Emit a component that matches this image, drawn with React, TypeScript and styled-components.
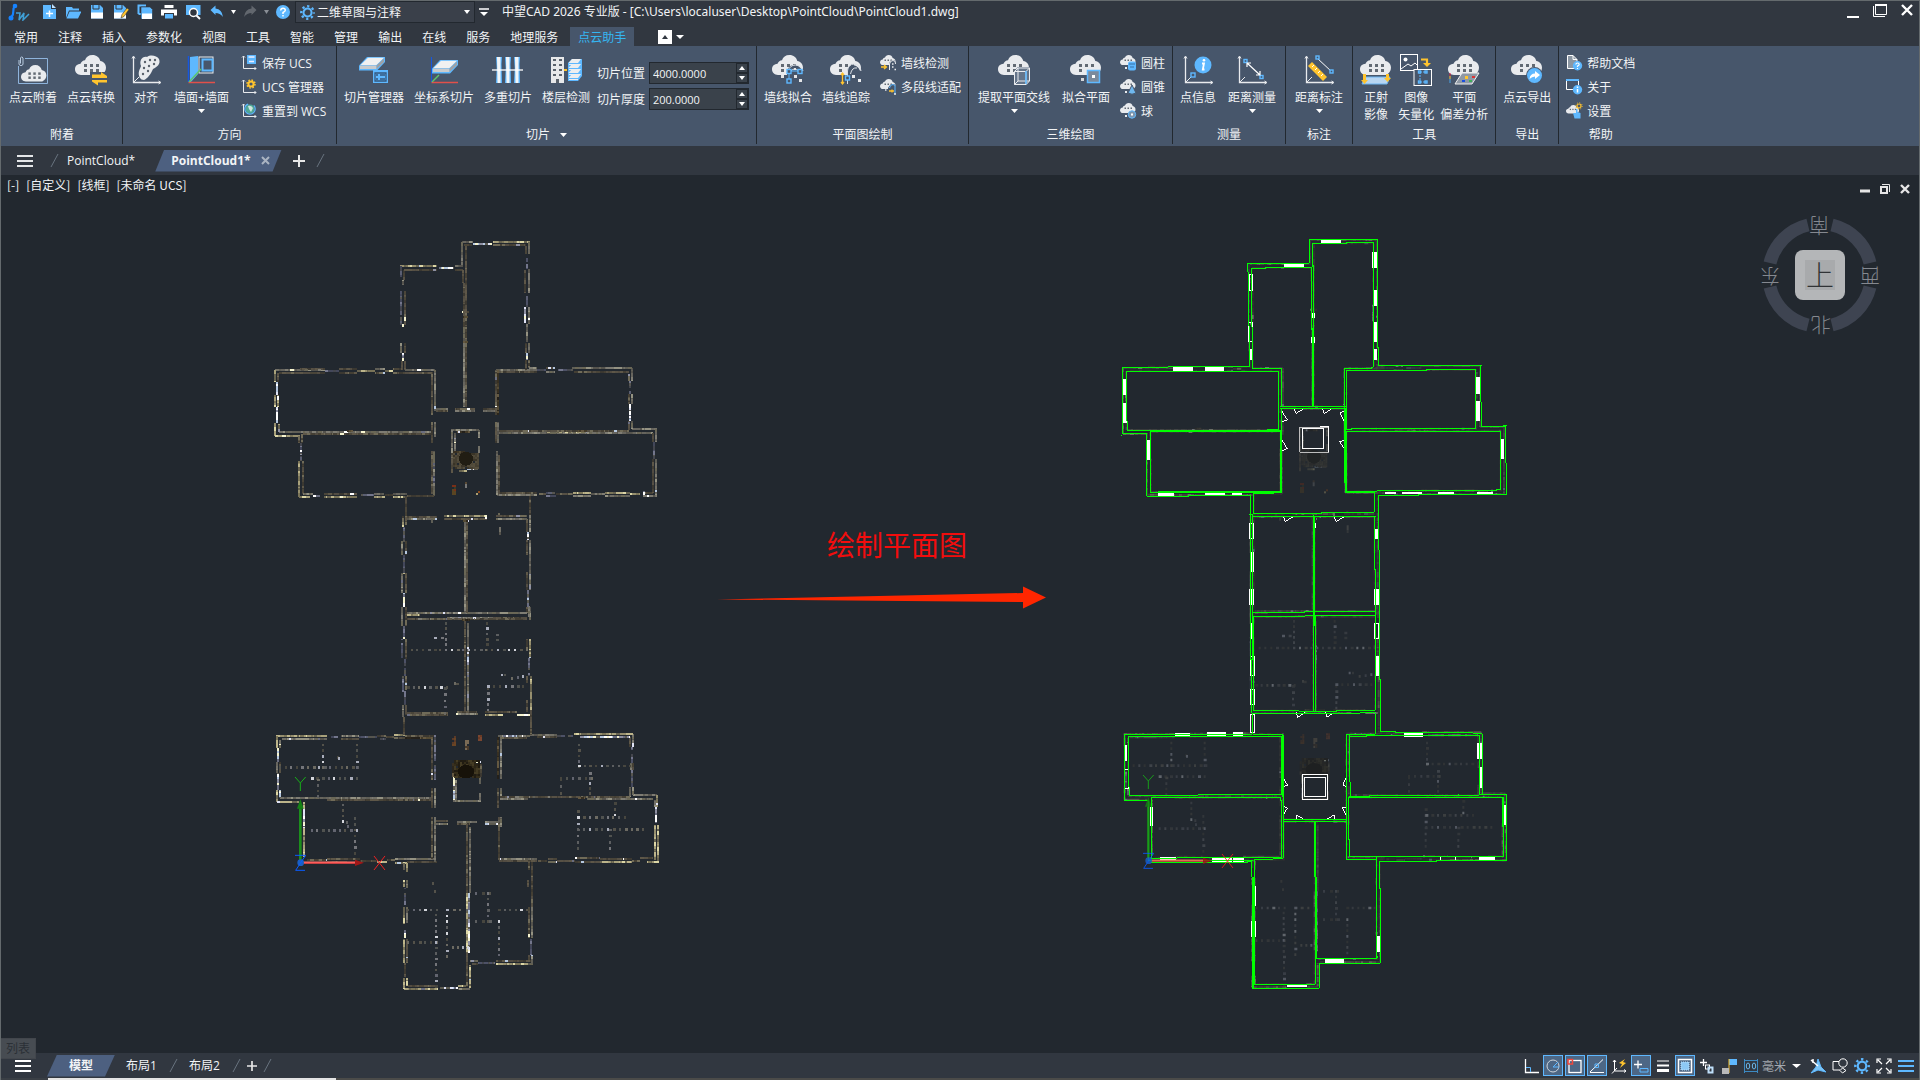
import React from 'react';
import styled, { createGlobalStyle, css } from 'styled-components';

const UI_FONT = `"Open Sans", "Noto Sans CJK SC", sans-serif`;
const BLUE = '#5eb8ff';
const YELLOW = '#ffc42e';
const PALE = '#e9ebee';

const Global = createGlobalStyle`
  * { box-sizing: border-box; }
  body { margin: 0; background: #22282f; font-family: ${UI_FONT}; font-size: 12px; color: #f2f4f6; }
  button, input, select { font: inherit; color: inherit; margin: 0; padding: 0; border: 0; background: none; }
  svg { display: block; flex: none; }
`;

/* ---------- layout ---------- */
const Page = styled.div`
  display: flex;
  flex-direction: column;
  min-height: 100vh;
  border: 1px solid #646a6d;
  border-bottom: 0;
  background: #22282f;
`;
const Row = styled.div<{ $gap?: number }>`
  display: flex;
  align-items: center;
  gap: ${(p) => p.$gap ?? 0}px;
`;
const ToolRow = styled.div`
  display: flex;
  align-items: flex-start;
  gap: 10px;
`;
const TitleBar = styled.header`
  display: flex;
  align-items: center;
  height: 22px;
  background: #313740;
`;
const QuickButton = styled.button<{ $w?: number }>`
  width: ${(p) => p.$w ?? 24}px;
  height: 22px;
  display: flex;
  align-items: center;
  justify-content: center;
`;
const Workspace = styled.label`
  display: flex;
  align-items: center;
  width: 180px;
  height: 22px;
  padding: 0 4px;
  gap: 2px;
  border: 1px solid #22282f;
  background: #3a404a;
`;
const WorkspaceSelect = styled.select`
  appearance: none;
  flex: 1;
  min-width: 0;
  outline: none;
`;
const Title = styled.h1`
  margin: 0 0 0 9px;
  font-family: "Noto Sans", "Noto Sans CJK SC", sans-serif;
  font-size: 12px;
  font-weight: 400;
  line-height: 20px;
  flex: 1;
  white-space: nowrap;
`;
const MenuBar = styled.nav`
  display: flex;
  align-items: flex-end;
  height: 23px;
  padding-left: 3px;
  background: #313740;
`;
const MenuTab = styled.button<{ $active?: boolean }>`
  height: 19px;
  padding: 2px 10px 0;
  line-height: 17px;
  white-space: nowrap;
  ${(p) =>
    p.$active &&
    css`
      margin: 0 2px;
      padding: 2px 8px 0;
      color: #35b6f2;
      background: #47566b;
    `}
`;
const CollapseButton = styled.button`
  display: flex;
  align-items: center;
  gap: 4px;
  height: 19px;
  margin-left: 22px;
`;
const Ribbon = styled.section`
  display: flex;
  height: 100px;
  padding-left: 1px;
  background: #47566b;
`;
const Group = styled.div`
  display: flex;
  flex-direction: column;
  height: 98px;
  padding: 0 7px;
  border-right: 1px solid #22282f;
  &:last-child { border-right: 0; }
`;
const GroupBody = styled.div<{ $gap?: number }>`
  display: flex;
  flex: 1;
  align-items: flex-start;
  gap: ${(p) => p.$gap ?? 10}px;
`;
const GroupLabel = styled.div`
  display: flex;
  align-items: center;
  justify-content: center;
  gap: 10px;
  height: 18px;
  line-height: 18px;
`;
const BigButton = styled.button<{ $menu?: boolean }>`
  display: flex;
  flex-direction: column;
  align-items: center;
  padding: 8px ${(p) => (p.$menu ? 2 : 0)}px 0;
  line-height: 17px;
  white-space: nowrap;
`;
const BigText = styled.span`
  margin: 3px 0;
`;
const SmallList = styled.div<{ $w?: number }>`
  display: flex;
  flex-direction: column;
  min-width: ${(p) => p.$w ?? 0}px;
  padding-top: 5px;
`;
const SmallButton = styled.button`
  display: flex;
  align-items: center;
  gap: 5px;
  height: 24px;
  white-space: nowrap;
`;
const Fields = styled.div`
  display: flex;
  flex-direction: column;
  gap: 4px;
  padding-top: 16px;
`;
const Field = styled.label`
  display: flex;
  align-items: center;
  gap: 4px;
  white-space: nowrap;
`;
const SpinBox = styled.span`
  display: flex;
  width: 100px;
  height: 22px;
  border: 1px solid #22282f;
  background: #3a424b;
`;
const SpinInput = styled.input`
  flex: 1;
  min-width: 0;
  padding: 0 3px;
  font-size: 11px;
  outline: none;
`;
const SpinArrows = styled.span`
  display: flex;
  flex-direction: column;
  width: 12px;
  gap: 2px;
  padding: 1px;
  background: #22282f;
`;
const SpinArrow = styled.button`
  flex: 1;
  display: flex;
  align-items: center;
  justify-content: center;
  background: #3a424b;
`;
const DocTabs = styled.nav`
  display: flex;
  align-items: center;
  height: 29px;
  padding-left: 16px;
  background: #313740;
`;
const DocTab = styled.button`
  padding: 0 20px 0 8px;
  line-height: 22px;
`;
const ActiveDoc = styled.div`
  display: flex;
  align-items: center;
  height: 22px;
  gap: 10px;
  padding: 0 12px 0 16px;
  font-weight: 700;
  background: #4d6080;
  clip-path: polygon(9px 0, 100% 0, calc(100% - 9px) 100%, 0 100%);
`;
const PlainButton = styled.button`
  display: flex;
  align-items: center;
`;
const Canvas = styled.main`
  position: relative;
  flex: 1;
  min-height: 600px;
`;
const Scene = styled.svg`
  position: absolute;
  inset: 0;
  width: 100%;
  height: 100%;
`;
const ViewLabels = styled.div`
  position: absolute;
  left: 6px;
  top: 1px;
  display: flex;
  gap: 7px;
  font-family: "Noto Sans CJK SC", sans-serif;
  line-height: 18px;
`;
const ViewWindow = styled.div`
  position: absolute;
  right: 8px;
  top: 8px;
  display: flex;
  gap: 8px;
`;
const ViewCube = styled.svg`
  position: absolute;
  right: 34px;
  top: 35px;
`;
const ListTip = styled.div`
  position: absolute;
  left: 0;
  bottom: -6px;
  z-index: 1;
  width: 35px;
  height: 21px;
  padding-left: 5px;
  line-height: 19px;
  color: #2b3036;
  border: 1px solid #42464c;
  border-left: 0;
  background: #474c52;
`;
const StatusBar = styled.footer`
  display: flex;
  align-items: center;
  justify-content: space-between;
  height: 25px;
  padding: 0 2px 0 14px;
  background: #313740;
`;
const LayoutTab = styled.button<{ $active?: boolean }>`
  height: 22px;
  padding: 0 12px 0 11px;
  line-height: 22px;
  ${(p) =>
    p.$active &&
    css`
      margin-left: 16px;
      padding: 0 22px;
      font-weight: 700;
      background: #4d6080;
      clip-path: polygon(10px 0, 100% 0, calc(100% - 10px) 100%, 0 100%);
    `}
`;
const StatusButton = styled.button<{ $on?: boolean }>`
  display: flex;
  align-items: center;
  justify-content: center;
  width: 20px;
  height: 21px;
  margin: 0 1px;
  border: 1px solid ${(p) => (p.$on ? BLUE : 'transparent')};
  background: ${(p) => (p.$on ? '#4d6785' : 'transparent')};
`;
const UnitButton = styled.button`
  display: flex;
  align-items: center;
  gap: 6px;
  padding-right: 6px;
  color: #a3a8ae;
`;
const BottomEdge = styled.div`
  height: 2px;
  background: linear-gradient(90deg, #3a3f45 47px, #e4e4e4 47px, #e4e4e4 335px, #4b4b49 335px);
`;

/* ---------- small glyphs ---------- */
const Caret = ({ w = 7, color = '#fff', up = false }: { w?: number; color?: string; up?: boolean }) => (
  <svg width={w} height={4} viewBox="0 0 8 4" preserveAspectRatio="none" aria-hidden>
    <path d={up ? 'M0 4L4 0L8 4z' : 'M0 0H8L4 4z'} fill={color} />
  </svg>
);
const Slash = () => (
  <svg width="9" height="15" viewBox="0 0 9 15" aria-hidden>
    <path d="M1 14L8 1" stroke="#68737f" fill="none" />
  </svg>
);
const Plus = ({ size = 12 }: { size?: number }) => (
  <svg width={size} height={size} viewBox="0 0 12 12" aria-hidden>
    <path d="M6 0V12M0 6H12" stroke="#e8e8e8" strokeWidth="2" />
  </svg>
);
const Burger = ({ w = 16, color = '#e4e6e8' }: { w?: number; color?: string }) => (
  <svg width={w} height="14" viewBox="0 0 16 14" preserveAspectRatio="none" aria-hidden>
    <path d="M0 2H16M0 7H16M0 12H16" stroke={color} strokeWidth="2" />
  </svg>
);

/* ---------- icon parts ---------- */
const CLOUD =
  'M6 20C2.500 20 0 17.500 0 14.300C0 11 2.500 9 5.500 8.800C6.500 6.500 8 5.300 10 5.200C11 2 13.500 0 17.500 0C21.500 0 24.500 2.500 25.300 6C28.800 6.800 31 9 31 12.800C31 16 29 18.500 26 20Z';
const Cloud = ({ x = 0, y = 1, s = 1, dots = 6 }: { x?: number; y?: number; s?: number; dots?: number }) => (
  <g transform={`translate(${x} ${y}) scale(${s})`}>
    <path d={CLOUD} fill={PALE} />
    {[[9, 9], [15, 9], [21, 9], [9, 14], [15, 14], [21, 14]].slice(0, dots).map(([a, b]) => (
      <rect key={`${a}-${b}`} x={a} y={b} width="3" height="3" fill="#626a73" />
    ))}
  </g>
);
const Axes = () => (
  <g stroke={PALE} fill="none">
    <path d="M3.500 3V28.500H30" strokeWidth="1.300" />
    <path d="M2 4.500L3.500 2L5 4.500M28.500 27L31 28.500L28.500 30M4 28L9 23" />
  </g>
);
const Node = ({ x, y, s = 4 }: { x: number; y: number; s?: number }) => (
  <rect x={x} y={y} width={s} height={s} fill="#47566b" stroke={BLUE} strokeWidth="1.400" />
);
const Slab = ({ x = 0, y = 0 }: { x?: number; y?: number }) => (
  <g transform={`translate(${x} ${y})`}>
    <path d="M0 8.500L8 0H26V5L18 13.500H0Z" fill={BLUE} />
    <path d="M1.500 8L9 .8H25L17.500 8Z" fill="#f1f1f1" />
    <path d="M1 8.500H17.500V12H1Z" fill="#c9cbcd" />
    <path d="M17.500 8.500L25 1.500V5L17.500 12Z" fill="#9da1a6" />
  </g>
);
const WallDots = () => (
  <g fill="#e4e6e8">
    <rect x="9" y="21" width="3" height="3" /><rect x="22" y="21" width="3" height="3" />
    <rect x="27" y="25" width="3" height="3" /><rect x="22" y="14" width="2" height="2" />
  </g>
);

const big: Record<string, React.ReactNode> = {
  attach: (<>
    <path d="M8 4.500H30.500V29.500H1.500V12" fill="none" stroke="#8fb4dc" />
    <path d="M2 6V10.500Q4 13 6 10.500V4Q4.500 1.500 3.500 4V9.500" fill="none" stroke="#b9cbe0" />
    <Cloud x={4} y={11} s={0.82} />
  </>),
  convert: (<>
    <Cloud />
    <path d="M15 18H33V32H15Z" fill="#47566b" />
    <path d="M17 20.500H26V18L32 22V24H17ZM32 28.500H23V31.500L17 27.500V26H32Z" fill={YELLOW} />
  </>),
  align: (<>
    <Axes />
    <path d="M10 24C7 19 10 15 11 12C9 7 12 2 17 3C21 0 27 2 29 5C31 10 27 13 23 15C21 20 17 25 14 26Q11 26 10 24Z" fill={PALE} />
    {[[15, 8], [20, 6], [25, 6], [14, 14], [19, 12], [24, 10], [13, 20], [18, 17]].map(([a, b]) => (
      <circle key={a * b} cx={a} cy={b} r="1.200" fill="#59616b" />
    ))}
  </>),
  walls: (<>
    <path d="M5 3V29L13 20V2Z" fill={BLUE} />
    <rect x="14" y="3" width="14" height="16" fill="none" stroke={PALE} />
    <rect x="17.500" y="5.500" width="10" height="11" fill="#47566b" stroke={BLUE} strokeWidth="2" />
    <path d="M3.500 2V28" stroke="#1557e0" strokeWidth="1.500" />
    <path d="M3.500 28.500H30" stroke="#e2504a" strokeWidth="1.500" /><path d="M4 28L16 15" stroke="#5fc46b" strokeWidth="1.500" />
  </>),
  manager: (<>
    <Slab x={1} y={3} />
    <rect x="15" y="16" width="15" height="13" fill={BLUE} />
    <path d="M17 19H28V27H17ZM18 21H20M18 25H20M22 21H27M22 25H27" fill="none" stroke="#35577d" strokeWidth="1.300" />
  </>),
  ucsSlice: (<>
    <Slab x={4} y={6} />
    <path d="M3.500 3V28" stroke="#1557e0" /><path d="M3.500 28.500H30" stroke="#e2504a" strokeWidth="1.500" />
    <path d="M4 28L11 21" stroke="#5fc46b" strokeWidth="1.500" />
  </>),
  multi: (<>
    {[4, 13, 22].map((v) => <path key={v} d={`M${v} 3H${v + 6}L${v + 5.5} 10L${v + 6} 29H${v}L${v + 0.7} 14Z`} fill={BLUE} />)}
    {[5, 14, 23].map((v) => <path key={v} d={`M${v} 3H${v + 3.500}V29H${v + 0.5}Z`} fill="#f3f5f7" />)}
    <path d="M0 16H31" stroke="#fff" strokeWidth="1.300" />
  </>),
  floors: (<>
    <rect x="1" y="3" width="13" height="26" fill="#e7e8ea" />
    {[6, 11, 16, 21].map((v) => <path key={v} d={`M3 ${v}H6M9 ${v}H12`} stroke="#59616b" strokeWidth="2.200" />)}
    <rect x="6" y="25" width="3" height="4" fill="#59616b" />
    <path d="M14 16H17" stroke={YELLOW} strokeWidth="2" />
    <path d="M18 9L22 5H32V22L28 27H18Z" fill={BLUE} />
    {[5, 10, 15, 20].map((v) => <path key={v} d={`M18.500 ${v + 4}L22 ${v}H31L28 ${v + 4}ZM19 ${v + 5}H28V${v + 6}H19Z`} fill="#eceef0" />)}
  </>),
  fit: (<>
    <Cloud dots={4} /><path d="M15 32V17Q17 10 23 11Q30 12 31 21V32Z" fill="#47566b" />
    <path d="M16 17Q18 11 23.500 11T31 17M19 17Q22 13 27 17" fill="none" stroke="#dbe0e6" />
    <path d="M17 18V27M17 17H28" stroke={BLUE} /><Node x={15} y={15.5} /><Node x={26} y={15.5} /><Node x={15} y={25} /><WallDots />
  </>),
  trace: (<>
    <Cloud dots={4} /><path d="M17 32V17Q19 10 23 11Q30 12 31 21V32Z" fill="#47566b" />
    <path d="M17.500 30V17Q18 10 24 10T31 17M20.500 20Q22 13 27 14" fill="none" stroke="#dbe0e6" />
    <path d="M12.500 19V30M11 21L12.500 19L14 21M11 28L12.500 30L14 28" fill="none" stroke={YELLOW} strokeWidth="1.300" />
    <Node x={15.5} y={22} /><rect x="22" y="21" width="3" height="3" fill={PALE} /><rect x="28" y="25" width="3" height="3" fill={PALE} />
  </>),
  intersect: (<>
    <Cloud dots={5} /><path d="M16 17L20 13H32V26L29 31H16Z" fill="#65758a" />
    <path d="M16.500 17.500H28V30.500H16.500ZM16.500 17.500L20 14H31.500V27L28 30.500M28 17.500L31.500 14M20 14V27H31M20 27L16.500 30.500" fill="none" stroke={PALE} />
    <path d="M28 17V30" stroke={BLUE} strokeWidth="1.500" />
  </>),
  plane: (<>
    <Cloud dots={4} /><rect x="17.500" y="16.500" width="12" height="12" fill="#7b8a9c" stroke={BLUE} strokeWidth="1.500" />
    <rect x="22" y="21" width="3" height="3" fill="#fff" /><rect x="11" y="24" width="3" height="3" fill="#d4d7da" />
  </>),
  info: (<>
    <Axes /><path d="M5 27L9 23" stroke={PALE} /><Node x={9} y={19} />
    <circle cx="21" cy="11" r="8.500" fill={BLUE} /><path d="M20 9.500H22L20.800 15.500H22.500" fill="none" stroke="#fff" strokeWidth="1.800" /><circle cx="22" cy="6.200" r="1.300" fill="#fff" />
  </>),
  measure: (<>
    <Axes /><Node x={8} y={5.5} s={3} /><Node x={24} y={21.5} s={3} />
    <path d="M11 9L24 21M11 13V9H15M20 21H24V17" fill="none" stroke="#fff" strokeWidth="1.200" />
  </>),
  dimension: (<>
    <Axes /><path d="M5 12L9 8L24 23L20 27Z" fill={YELLOW} />
    <path d="M9 13L11 11M12 16L14 14M15 19L17 17M18 22L20 20" stroke="#fff" />
    <path d="M14 4L29 18" stroke="#fff" /><Node x={13} y={2} s={3} /><Node x={27} y={16} s={3} />
  </>),
  ortho: (<>
    <Cloud /><path d="M5 23H30L27 30H2Z" fill="#b8d6f2" stroke="#6cb4f0" />
    <path d="M3 20H6V26H8L4.500 30L1 26H3ZM26 20H29V24H31L27.500 28L24 24H26Z" fill={YELLOW} />
  </>),
  vectorize: (<>
    <rect x="0.500" y="0.500" width="17" height="16" fill="none" stroke="#fff" /><circle cx="5.500" cy="5.500" r="2" fill="#fff" />
    <path d="M1 15L8 10L11 12L15 9L18 12" fill="none" stroke="#fff" />
    <path d="M21 5.500H27V11" fill="none" stroke={YELLOW} strokeWidth="2.200" /><path d="M23 9H31L27 13Z" fill={YELLOW} />
    <rect x="14" y="15.500" width="17.500" height="16" fill="#47566b" stroke="#fff" />
    <path d="M20 18V29M20 18H26M20 28H26" stroke={BLUE} strokeDasharray="2 1" /><Node x={18.5} y={17} s={2} /><Node x={25} y={17} s={2} /><Node x={18.5} y={27} s={2} /><Node x={25} y={27} s={2} />
  </>),
  deviation: (<>
    <Cloud /><path d="M14 19H31L24 30H7Z" fill="#8f99a6" stroke="#f0f0f0" />
    <path d="M2 19V22" stroke="#d24" /><path d="M2 22V25" stroke={YELLOW} /><path d="M2 25V29" stroke="#4aa3e8" />
    <g><rect x="17" y="22" width="3" height="3" fill={YELLOW} /><rect x="24" y="22" width="3" height="2" fill="#d33" /><rect x="14" y="26" width="3" height="2" fill="#1a4fe0" /><rect x="21" y="26" width="3" height="2" fill="#3fae5a" /></g>
  </>),
  exportCloud: (<>
    <Cloud dots={4} /><circle cx="23.500" cy="21.500" r="8.500" fill="#47566b" /><circle cx="23.500" cy="21.500" r="7.500" fill={BLUE} />
    <path d="M18.500 25Q19 19.500 24 19.500V17L29 21L24 25V22.500Q21 22.500 18.500 25Z" fill="#fff" />
  </>),
};

const SmallAxes = () => <path d="M2.500 1V13.500H15M1 2.500L2.500 1L4 2.500M13.500 12L15 13.500L13.500 15" fill="none" stroke={PALE} />;
const MiniCloud = () => <Cloud x={0} y={0} s={0.5} dots={3} />;
const small: Record<string, React.ReactNode> = {
  saveUcs: (<><SmallAxes /><rect x="6" y="0" width="9" height="9" fill={BLUE} /><path d="M7.500 2H13.500M8 6.500H13" stroke="#eef" strokeWidth="1.500" /></>),
  ucsManager: (<><SmallAxes /><circle cx="10" cy="5" r="2.600" fill="none" stroke={YELLOW} strokeWidth="2" /><circle cx="10" cy="5" r="4" fill="none" stroke={YELLOW} strokeWidth="1.500" strokeDasharray="1.600 1.540" /></>),
  resetWcs: (<><SmallAxes /><circle cx="9" cy="6" r="4.500" fill="#4fa896" /><path d="M7 3Q10 2 12 5L10 9L8 6Z" fill="#cfe6dd" /><circle cx="9" cy="6" r="5.200" fill="none" stroke={BLUE} strokeWidth="1.200" strokeDasharray="22 6" /></>),
  detect: (<><MiniCloud /><path d="M9 16V9Q10 5 13 5T16 9V16Z" fill="#47566b" /><path d="M9.500 15V9Q10 5.500 13 5.500T15.500 9" fill="none" stroke={PALE} /><path d="M1 12H6M4 10L6.500 12L4 14" stroke={YELLOW} fill="none" strokeWidth="1.300" /><path d="M12 9H13.500M12 12H13.500M14.500 14.500H16" stroke={PALE} strokeWidth="1.500" /></>),
  polyfit: (<><MiniCloud /><path d="M8 16V9Q10 5 13 5T16 9V16Z" fill="#47566b" /><path d="M9.500 9Q10 5.500 13 5.500T15 9V15" fill="none" stroke={BLUE} /><path d="M9 12H14M12 10.500V13.500" stroke={YELLOW} strokeWidth="1.300" /><path d="M5 11H6.500M14 15H16" stroke={PALE} strokeWidth="1.500" /></>),
  cylinder: (<><MiniCloud /><rect x="8" y="6.500" width="8" height="9" rx="2" fill={BLUE} /><path d="M9 9H15M10 12H14" stroke="#3670a8" /><rect x="5" y="12" width="2" height="2" fill={PALE} /></>),
  cone: (<><MiniCloud /><path d="M12 6L16 14Q12 16.500 8 14Z" fill="#6fb7ee" stroke="#47566b" /><rect x="5" y="12" width="2" height="2" fill={PALE} /></>),
  sphere: (<><MiniCloud /><circle cx="12" cy="11.500" r="3.700" fill="#7b94ad" stroke={BLUE} /><rect x="11" y="10.500" width="2" height="2" fill="#fff" /><rect x="5" y="12" width="2" height="2" fill={PALE} /></>),
  helpDoc: (<><path d="M1.500 .5H7L11 4.500V13.500H1.500Z" fill="#8c97a3" stroke="#fff" /><path d="M7 .5V4.500H11" fill="none" stroke="#fff" /><circle cx="11.500" cy="10.800" r="4.700" fill={BLUE} /><path d="M9.800 9.500Q10 8 11.500 8T13.200 9.500Q13 10.500 11.500 11V12M11.500 13V14" fill="none" stroke="#fff" strokeWidth="1.200" /></>),
  about: (<><path d="M.5 1V10.500H8M12.500 1V6" fill="none" stroke="#fff" /><path d="M0 1H13" stroke={BLUE} strokeWidth="2" /><circle cx="11.500" cy="10.800" r="4.700" fill={BLUE} /><path d="M11.500 10V13.500M11.500 7.500V9" stroke="#fff" strokeWidth="1.500" /></>),
  settings: (<><Cloud x={0} y={2} s={0.42} dots={3} /><circle cx="13" cy="3" r="2" fill="none" stroke={YELLOW} strokeWidth="1.200" /><circle cx="13" cy="3" r="3.200" fill="none" stroke={YELLOW} strokeDasharray="1 1.500" /><path d="M10 6V10H7L8.500 15.500H14.500V10L11.500 9V6Z" fill={BLUE} /></>),
};

const BigTool = ({ icon, lines, menu }: { icon: string; lines: string[]; menu?: boolean }) => (
  <BigButton $menu={menu}>
    <svg width="32" height="32" viewBox="0 0 32 32" overflow="visible" aria-hidden>{big[icon]}</svg>
    <BigText>{lines.map((l, i) => <React.Fragment key={l}>{i > 0 && <br />}{l}</React.Fragment>)}</BigText>
    {menu && <Caret />}
  </BigButton>
);
const SmallTool = ({ icon, text }: { icon: string; text: string }) => (
  <SmallButton>
    <svg width="16" height="16" viewBox="0 0 16 16" overflow="visible" aria-hidden>{small[icon]}</svg>
    {text}
  </SmallButton>
);
const Spinner = ({ label, value }: { label: string; value: string }) => (
  <Field>
    {label}
    <SpinBox>
      <SpinInput defaultValue={value} aria-label={label} />
      <SpinArrows>
        <SpinArrow aria-label="+"><Caret up w={6} /></SpinArrow>
        <SpinArrow aria-label="-"><Caret w={6} /></SpinArrow>
      </SpinArrows>
    </SpinBox>
  </Field>
);

/* ---------- quick access icons ---------- */
const Q = ({ children, w = 16 }: { children: React.ReactNode; w?: number }) => (
  <svg width={w} height="16" viewBox={`0 0 ${w} 16`} aria-hidden>{children}</svg>
);
const Disk = ({ x = 0, y = 0 }: { x?: number; y?: number }) => (
  <g transform={`translate(${x} ${y})`}>
    <path d="M0 0H9L12 3V13.500H0Z" fill={BLUE} />
    <path d="M2 0V4H8V0" fill="none" stroke="#313740" />
    <rect x="0" y="7.500" width="12" height="6" fill="#fff" />
  </g>
);
const quick: [string, React.ReactNode][] = [
  ['新建', <><path d="M2 1H10V5H15V15H2Z" fill={BLUE} /><path d="M11 0L15 4H11Z" fill="#bfe2ff" /><path d="M8.500 6.500V13M5 9.500H12" stroke="#fff" strokeWidth="1.500" /></>],
  ['打开', <><path d="M1 14V3H7L8 4.500H14V6.500H4Z" fill={BLUE} /><path d="M4.500 7.500H16.500L13 14.500H1.500Z" fill={BLUE} /></>],
  ['保存', <Disk x={2} y={1} />],
  ['另存为', <><Disk x={1} y={1} /><path d="M8 14L9 10.500L14 4L16 5.500L11 12.500Z" fill={YELLOW} stroke="#313740" strokeWidth=".6" /></>],
  ['全部保存', <><path d="M1.500 10V1.500H9M1.500 10H4" stroke={BLUE} strokeWidth="2" fill="none" /><path d="M4 3H13L15.500 5.500V15H4Z" fill={BLUE} stroke="#313740" strokeWidth=".6" /><rect x="5" y="9.500" width="10" height="5.500" fill="#fff" /></>],
  ['打印', <><path d="M3.500 1H12.500V4H3.500Z" fill="#fff" /><path d="M0 5.500H16V11.500H13V9H3V11.500H0Z" fill="#fff" /><rect x="4" y="10" width="8" height="4.500" fill={BLUE} /></>],
  ['打印预览', <><path d="M1 1H15.500V11H1Z" fill={BLUE} /><circle cx="8.500" cy="8.500" r="4" fill="#313740" stroke="#fff" strokeWidth="1.500" /><path d="M11.500 11.500L15 15" stroke="#fff" strokeWidth="2" /></>],
  ['撤销', <path d="M1.500 6L6.500 1.500V4.500Q13 5 14 13Q11 9 6.500 9V11Z" fill={BLUE} />],
];
const Gear = ({ size = 15, color = BLUE }: { size?: number; color?: string }) => (
  <svg width={size} height={size} viewBox="0 0 16 16" aria-hidden>
    <circle cx="8" cy="8" r="4.300" fill="none" stroke={color} strokeWidth="2.200" />
    <circle cx="8" cy="8" r="6.700" fill="none" stroke={color} strokeWidth="2.400" strokeDasharray="2.400 2.860" strokeDashoffset="1.200" />
  </svg>
);

/* ---------- point cloud ---------- */
const PALETTES: Record<string, string[]> = {
  D: ['#443f34', '#524c42', '#3b3831', '#5e5748', '#4a4539', '#575145', '#706b58'],
  G: ['#727067', '#5f5e56', '#7e7c73', '#6a6756', '#55534d', '#949282', '#67655e'],
  Y: ['#968f6e', '#bcb48a', '#7a7458', '#a8a17b', '#dcd6a6', '#676350'],
  W: ['#ffffff', '#dfe2f4', '#8e90a2', '#f5f3cf', '#6a6d80', '#b5c7df', '#5c5a50'],
  V: ['#4d5166', '#43475a', '#5b5f72', '#73768c', '#44464d', '#56554f'],
  B: ['#2c261c', '#383022', '#433a28', '#554b34', '#24201a', '#645841'],
};
/* x1,y1,x2,y2,palette in thirds of a canvas unit */
const WALLS_TOP = `605,66,640,66,G;700,66,809,66,Y;612,76,635,76,D;640,72,697,72,W;700,76,797,76,D;606,66,606,138,G;618,78,618,190,D;806,66,806,102,G;797,78,797,102,D;801,102,801,147,V;807,147,807,220,G;795,150,795,218,D;801,220,801,262,V;795,260,795,310,W;807,260,807,312,G;801,312,801,366,G;807,368,807,398,G;797,368,797,398,D;801,398,801,420,W;799,420,799,450,D;807,420,807,445,D
421,138,530,138,Y;432,150,530,150,D;536,144,582,144,W;585,138,608,138,G;585,150,608,150,D;423,138,423,170,V;432,150,432,180,D;429,180,429,196,G;423,213,423,315,V;434,213,434,315,D;429,313,429,320,W;423,368,423,400,G;434,368,434,400,D;429,400,429,422,W;426,422,426,450,D;434,424,434,450,D;609,150,609,190,D;612,190,612,320,D;618,190,618,320,D;612,320,612,400,G;618,320,618,400,D;612,400,612,560,G;618,400,618,560,D;585,566,645,566,D;585,573,645,573,G;606,275,627,275,D;609,290,624,290,B;609,365,624,365,B
45,450,195,450,G;120,446,195,446,D;57,458,195,458,D;195,452,237,452,V;237,447,292,447,D;237,458,292,458,D;292,452,345,452,Y;345,447,375,447,G;345,458,375,458,D;375,452,400,452,Y;400,447,425,447,D;400,458,435,458,D;435,450,525,450,G;435,458,520,458,D
45,450,45,486,Y;54,458,54,486,D;50,486,50,525,W;45,525,45,560,Y;54,525,54,560,Y;50,560,50,610,W;45,610,45,648,Y;56,612,56,636,Y;45,648,120,648,Y;57,636,520,636,G;130,642,520,642,D;260,632,280,632,B;517,458,517,585,D;525,450,525,573,G;517,605,517,668,D;524,605,524,650,G;527,566,563,566,G;527,573,563,573,D;670,566,706,566,D;670,573,706,573,G
117,648,117,670,D;127,642,127,670,D;123,670,123,722,V;123,672,123,705,W;117,722,117,830,Y;129,722,129,822,D;117,830,150,830,Y;130,822,160,822,G;160,828,180,828,W;192,822,292,822,D;192,831,292,831,Y;295,826,342,826,V;342,822,372,822,G;342,831,375,831,Y;375,826,400,826,D;400,822,440,822,G;400,831,440,831,Y;440,828,522,828,D;516,692,516,822,D;522,692,522,828,G;522,730,522,790,V
708,450,830,450,G;716,456,830,456,D;806,443,832,443,G;832,450,857,450,V;857,444,885,444,D;857,456,885,456,G;885,450,940,450,V;936,444,1116,444,G;942,456,1107,456,D;1116,444,1116,483,G;1106,462,1106,483,D;1110,483,1110,522,V;1116,522,1116,553,G;1106,522,1106,553,D;1110,553,1110,603,W;1116,603,1116,627,G;1106,603,1106,630,D;1116,627,1190,627,G;716,632,1107,632,D;716,640,1107,640,G;860,636,980,636,Y;955,632,980,632,B;1107,638,1180,638,G;708,450,708,584,D;715,450,715,584,B;708,605,708,668,D;715,605,715,668,G
1188,627,1188,665,G;1178,640,1178,665,D;1182,665,1182,717,V;1188,717,1188,828,G;1178,717,1178,820,D;711,692,711,825,G;717,705,717,822,D;711,825,830,825,G;717,820,830,820,D;838,822,858,822,D;858,818,888,818,V;858,828,888,828,V;888,822,940,822,D;940,818,992,818,Y;940,828,992,828,G;992,822,1036,822,G;1036,818,1110,818,Y;1036,828,1110,828,G;1110,822,1140,822,Y;1150,818,1180,818,D;1150,828,1190,828,G;1152,814,1152,826,W
574,630,658,630,G;576,630,576,700,G;585,640,585,695,G;585,655,585,678,W;657,630,657,655,G;657,678,657,700,G;590,637,630,637,B;580,697,615,697,B;620,746,655,746,W;598,754,620,754,Y;576,700,576,760,D
438,828,438,890,D;428,888,428,905,D;440,890,530,890,D;440,897,530,897,G;553,888,680,888,Y;553,897,680,897,D;678,886,678,898,W;516,897,516,908,G;708,888,800,888,D;708,897,800,897,G;718,880,718,886,G;719,922,719,945,G;809,828,809,885,D;800,898,800,935,D;809,885,809,935,G;804,935,804,960,W;809,960,809,1110,G;800,960,800,1005,D;800,1055,800,1110,D;804,1110,804,1160,W;810,1160,810,1200,G;800,1160,800,1178,D
428,903,428,920,Y;437,890,437,915,D;432,920,432,965,V;427,962,427,1005,G;437,962,437,1005,D;432,1005,432,1060,V;431,1055,431,1062,Y;427,1060,427,1118,G;437,1060,437,1118,D;432,1118,432,1160,W;427,1160,427,1200,G;437,1160,437,1185,D;614,898,614,1180,G;620,898,620,1180,D;609,903,627,903,B;440,1179,800,1179,G;440,1184,480,1184,Y;440,1196,800,1196,D;570,1194,640,1194,G`;
const WALLS_LOW = `427,20,427,78,G;437,40,437,78,D;432,78,432,118,V;427,118,427,178,V;437,118,437,178,D;434,178,434,228,V;428,228,428,275,V;437,228,437,270,D;434,270,434,315,V;430,315,430,350,G;438,315,438,345,D;432,350,432,405,D;445,40,800,40,G;440,57,560,57,G;560,55,700,55,G;700,55,800,57,D
615,55,615,340,D;624,70,624,340,G;624,150,624,230,W;605,60,630,60,B;807,18,807,50,G;809,118,809,175,Y;800,118,800,150,D;806,175,806,228,V;812,228,812,330,Y;802,228,802,250,D;802,300,802,335,D;812,330,812,405,D;772,345,812,345,W;440,345,565,345,D;440,338,565,338,D;590,343,655,343,G;590,336,650,336,D;676,345,730,345,Y;676,336,772,336,D;592,340,592,346,W
47,408,200,408,Y;65,418,200,418,G;200,412,243,412,V;243,407,298,407,G;243,416,298,416,D;298,411,350,411,V;350,407,378,407,D;350,416,378,416,V;378,411,402,411,D;402,406,435,406,Y;402,415,435,415,D;435,408,525,408,D;435,415,520,415,B;50,408,50,445,Y;60,420,60,445,G;54,445,54,485,W;51,485,51,518,G;60,485,60,518,D;54,518,54,570,W;50,570,50,605,Y;60,570,60,595,W;50,605,118,605,Y;60,595,520,595,G;200,600,520,600,D;517,415,517,540,D;525,405,525,540,V;517,565,517,625,D;524,565,524,625,G
132,605,132,628,Y;132,628,132,685,W;132,685,132,770,Y;140,780,200,780,D;200,776,300,776,D;200,786,260,786,D;300,783,350,783,D;350,787,380,787,Y;380,780,405,780,D;405,776,525,776,G;405,788,440,788,Y;440,785,530,785,D;517,652,517,778,D;526,652,526,785,G;527,664,565,664,D;527,671,565,671,G;590,665,652,665,G;590,673,630,673,D;676,665,718,665,G;676,671,715,671,W
715,407,810,407,G;730,408,790,408,W;720,415,800,415,D;810,406,890,406,G;830,411,890,411,D;890,407,940,407,V;942,403,1120,403,Y;960,412,1110,412,W;1120,403,1120,440,G;1110,412,1110,440,D;1116,440,1116,490,V;1112,490,1112,510,G;1120,490,1120,510,D;1116,510,1116,560,V;1110,560,1110,590,G;1119,560,1119,585,G;1118,586,1192,586,G;720,592,1110,592,D;720,592,870,592,G;720,598,805,598,G;955,594,975,594,B;980,596,1180,596,G;1190,586,1190,620,Y;1184,600,1184,620,G;1188,622,1188,670,W;1184,676,1184,780,Y;1193,676,1193,788,Y
714,410,714,536,B;722,410,722,536,G;714,565,714,625,D;722,565,722,600,G;716,652,716,780,D;722,652,722,680,G;718,778,830,778,G;718,784,830,784,D;835,784,860,784,D;865,776,890,776,D;865,786,890,786,G;890,782,945,782,D;945,775,1020,775,D;945,785,1020,785,D;1020,786,1115,786,Y;1020,778,1115,778,D;1115,782,1140,782,D;1140,775,1180,775,D;1160,787,1195,787,Y
583,530,583,600,W;587,540,587,600,G;580,603,662,603,G;660,530,660,553,G;660,580,660,603,G;578,490,578,530,B;620,487,662,487,W;662,493,662,530,D
433,788,433,810,G;441,788,441,815,Y;432,840,432,860,Y;441,840,441,865,G;435,865,435,920,V;432,920,432,973,Y;441,920,441,970,G;435,990,435,1015,W;432,1018,432,1090,Y;441,1018,441,1090,D;435,1090,435,1130,D;432,1133,432,1168,Y;441,1133,441,1158,Y;432,1168,535,1168,Y;445,1158,535,1158,D;540,1163,595,1163,W;595,1158,625,1158,Y;595,1166,630,1166,G;620,673,620,880,D;629,680,629,880,G;620,880,620,1060,Y;627,880,627,1060,W;620,1060,620,1160,D;629,1095,629,1165,Y
629,1083,655,1083,G;635,1092,655,1092,D;655,1088,705,1088,V;687,1088,705,1088,W;708,1083,815,1083,D;708,1093,818,1093,Y;806,784,806,810,D;815,784,815,920,D;804,840,804,860,D;806,920,806,1015,D;815,920,815,1015,G;812,1015,812,1065,V;806,1065,806,1085,D;816,1065,816,1093,G`;
const DOTS_LOW = `455,150,800,150;558,70,558,150;680,70,680,150;712,105,712,120;525,114,545,114;445,262,560,262;555,265,555,340;685,260,790,260;685,265,685,330;755,235,790,230;725,225,735,225;585,250,590,252
60,503,295,503;190,435,190,503;290,435,290,503;155,536,290,536;175,540,175,590;235,473,237,475;250,615,250,665;262,668,264,680;155,692,290,692;286,655,286,760;957,435,957,500;957,498,1110,498;903,535,995,535;990,520,990,580;903,540,903,580;955,652,1095,652;1066,610,1066,645;955,688,1150,688;953,635,953,745;1051,690,1051,745
445,930,530,930;562,930,620,930;527,945,527,1060;562,930,562,1070;445,1028,530,1028;580,1042,625,1042;528,1060,528,1160;648,880,690,880;684,880,684,965;648,965,690,965;718,930,800,930;718,965,718,1065;520,850,525,875`;

const buildCloud = () => {
  let seed = 20261;
  const rnd = () => {
    seed = (seed * 1664525 + 1013904223) >>> 0;
    return seed / 4294967296;
  };
  const paths: Record<string, string> = {};
  const put = (c: string, x: number, y: number, w: number, h: number) => {
    paths[c] = (paths[c] ?? '') + `M${Math.round(x)} ${Math.round(y)}h${w}v${h}h${-w}z`;
  };
  const parse = (s: string) => s.split(/[;\n]/).map((t) => t.split(','));
  const walls = (src: string, dy: number) =>
    parse(src).forEach(([a, b, c, d, k]) => {
      const [x1, y1, x2, y2] = [+a, +b + dy, +c, +d + dy];
      const horizontal = Math.abs(x2 - x1) >= Math.abs(y2 - y1);
      const length = horizontal ? x2 - x1 : y2 - y1;
      let t = 0;
      while (t < length) {
        const step = Math.min(length - t, 3 + Math.floor(rnd() * 4) * 3);
        const pal = PALETTES[rnd() < 0.025 ? 'W' : k];
        const color = pal[Math.floor(rnd() * pal.length)];
        if (!(k === 'V' && rnd() < 0.1) && step > 0) {
          if (horizontal) put(color, x1 + t, y1 - 3, step, 6);
          else put(color, x1 - 3, y1 + t, 6, step);
        }
        t += Math.max(step, 1);
      }
    });
  walls(WALLS_TOP, 0);
  walls(WALLS_LOW, 1140);
  const dotColors = ['#5c5e60', '#74757a', '#54524a', '#a9adbb', '#62646f', '#47463f', '#d4d6dc', '#6c6a62', '#50524f'];
  parse(DOTS_LOW).forEach((p) => {
    const [x1, y1, x2, y2] = p.map(Number);
    const n = Math.max(1, Math.round(Math.hypot(x2 - x1, y2 - y1) / 17));
    for (let i = 0; i <= n; i++) {
      put(dotColors[Math.floor(rnd() * dotColors.length)], x1 + ((x2 - x1) * i) / n - 3, y1 + 1140 + ((y2 - y1) * i) / n - 4, rnd() < 0.3 ? 9 : 6, 8);
    }
  });
  const blob = (x: number, y: number, w: number, h: number, pal: string[]) => {
    for (let i = 0; i < w; i += 6) for (let j = 0; j < h; j += 6) if (rnd() < 0.93) put(pal[Math.floor(rnd() * pal.length)], x + i, y + j, 6, 6);
  };
  blob(580, 700, 76, 48, ['#453f31', '#4f4838', '#3a3427', '#554e3d']);
  blob(582, 1620, 78, 52, ['#2b2517', '#352d1a', '#443b23', '#211c12']);
  blob(576, 795, 8, 28, ['#7a2f18', '#5a4522', '#33402a']);
  blob(614, 787, 6, 16, ['#5a4a35', '#777777']);
  blob(648, 814, 10, 10, ['#8a4a1c', '#b0a070']);
  blob(577, 1548, 8, 30, ['#6a4424', '#5a3a28']);
  blob(616, 1560, 7, 26, ['#7a6a55', '#4a3a2a']);
  blob(654, 1546, 8, 16, ['#6a3a24', '#7a4630']);
  return Object.entries(paths);
};
const CLOUD_PATHS = buildCloud();
const PointCloud = () => (
  <>
    {CLOUD_PATHS.map(([c, d]) => <path key={c} d={d} fill={c} />)}
    <ellipse cx="618" cy="716" rx="21" ry="21" fill="#211d13" />
    <ellipse cx="618" cy="1655" rx="25" ry="20" fill="#171209" />
  </>
);

/* ---------- fitted plan ---------- */
const PLAN_TOP = `M628 58H832V382H835V438H1142V547H1145V620H1217V730H1220V823H957V826H835V990H838V1200
M628 58V130H443V157H446V318H448V440H205V442H67V642H140V829H266V826H452V1200M1142 438H1146M64 646H67M1210 616H1220
M637 142V70H740V67H820V442H815V445H733V788H736V817H823V877H665V880H460V820H522V817H545V565
M634 142H497V145H452M455 145V320H457V445H545V560M634 142V330M640 136V560M637 325V560
M541 560H738M541 566H738M79 454H536V628H502V631M79 454V602H82V631H545M151 634H545M275 636H275M151 632V817H541M175 814H541V630M543 640V815
M739 628V451H980V448H1127V625H755V628H733M733 634H893V636H739V812M893 634H1202V808H1190V811H832V814M736 565V815H830
M457 889H823V1048H826V1200M448 883H457V1200M640 886V1174M643 889V1200M457 1177H615V1174H826M457 1189H615V1187H826M823 889H828`;
const PLAN_LOW = `M451 0V178H454V340M457 0V180M460 48V331H597V334H710V331H826V0M640 0V80H640V334M646 48V334M643 0V78
M838 0V238H841V395H888V398H1120V401H1147V583H1220V781H1010V784H838V865H841V1090H658V1165H457V830H454V784H443V787H154
M457 340H780V338H826V403M457 340V403H73V601H145V784M460 405H550V775H520V778H463V1153H646V664M85 409H545V583H295V586H88V560H85V409
M548 405V590M154 592H541V601H545V772H232V775H154V592M550 658H739M550 664H739M643 664V830H646V1080M649 830V1075H832V1069
M829 772V1075M739 403H826M739 403V778H829V772M748 409H800V406H1138V586H1075V583M748 406V545H751V589H810V586H1138M745 592H1211V769H748V718H745V592
M748 590H810M1138 583H1147M1208 590V680M460 830V1165M145 781H460`;
const WINDOWS_TOP = `663,61,60,10;552,132,60,9;817,96,13,48;821,210,10,48;820,306,11,60;821,387,10,33;219,442,60,11;315,442,57,11;67,477,13,48;70,549,10,60;140,660,11,60;449,387,7,33;1127,471,12,51;1127,543,13,60;1203,657,9,60;174,818,48,9;315,817,60,7;396,817,30,7;855,815,33,8;906,815,60,8;1014,815,48,8;1131,815,48,8;449,996,12,60;448,1106,13,48;824,927,10,30;633,280,12,13;634,352,10,16;640,908,8,16;822,1106,14,48`;
const WINDOWS_LOW = `225,399,45,9;321,397,57,13;399,397,30,13;912,399,57,12;1132,430,14,47;1136,501,10,62;1208,615,10,60;452,70,8,46;824,168,14,60;151,621,7,57;336,774,60,11;399,774,33,11;180,771,48,8;1137,768,48,11;455,858,12,60;829,1008,11,48;675,1078,57,11;456,1080,10,50;561,1151,60,11;76,436,6,46;448,0,13,14`;
const HOLLOW = `448,163,10,50;446,307,11,58;448,912,13,44;824,1109,12,44;453,1309,10,57;453,1408,10,46;453,1484,10,54;455,2104,12,46;824,1210,11,46;75,1648,10,57;1021,1909,46,12;824,1140,12,12`;
const rects = (s: string) => s.split(';').map((r) => r.split(',').map(Number));
const DOORS_TOP = 'M583 568L588 580L610 568M668 568L673 580L694 568M546 574L562 600L546 605M732 602L719 578L732 574M546 661L562 686L546 692M732 685L719 664L738 661M551 890L555 904L578 892M703 890L708 904L731 892';
const DOORS_LOW = 'M590 337L592 352L615 338M677 337L680 352L703 338M552 538L563 556L552 559M738 534L728 556L740 559M552 620L562 624L552 642M725 622L738 624M726 622L738 645M590 660V645L615 660M680 658L702 645L704 658';

const FloorPlan = () => (
  <g shapeRendering="crispEdges" fill="none">
    {rects(WINDOWS_TOP).map(([x, y, w, h]) => <rect key={`${x}.${y}`} x={x} y={y} width={w} height={h} fill="#fff" />)}
    {rects(WINDOWS_LOW).map(([x, y, w, h]) => <rect key={`${x}.${y}`} x={x} y={y + 1140} width={w} height={h} fill="#fff" />)}
    {rects(HOLLOW).map(([x, y, w, h]) => <rect key={`${x}.${y}`} x={x} y={y} width={w} height={h} stroke="#fff" strokeWidth="3" />)}
    <path d="M600 622H686V697H600Z" stroke="#bdbdbd" strokeWidth="3" />
    <path d="M607 628V685H671V625H607M660 619H686V697" stroke="#fff" strokeWidth="3" />
    <path d="M605 1665H683V1738H607V1665M613 1672H677V1730H613Z" stroke="#fff" strokeWidth="3" />
    <path d={DOORS_TOP} stroke="#fff" strokeWidth="3" />
    <path d={DOORS_LOW} transform="translate(0 1140)" stroke="#fff" strokeWidth="3" />
    <path d={PLAN_TOP} stroke="#00ff00" strokeWidth="3" />
    <path d={PLAN_LOW} transform="translate(0 1140)" stroke="#00ff00" strokeWidth="3" />
  </g>
);

const UcsIcon = ({ dim }: { dim?: boolean }) => (
  <g fill="none" opacity={dim ? 0.85 : 1}>
    <path d="M123 788H290" stroke="#ff4b4b" strokeWidth="6" />
    <path d="M123 786H290" stroke="#ff8a80" strokeWidth="2" />
    <path d="M285 779L312 788L285 798Z" fill="#a01818" />
    <path d="M121 788V625" stroke="#1c8f1c" strokeWidth="8" />
    <path d="M111 626L121 597L131 626Z" fill="#158215" />
    <circle cx="122" cy="788" r="10" fill="#1a5fc4" />
    <path d="M105 766H137L107 811H135" stroke="#0a5cff" strokeWidth="3" />
    <path d="M105 531L121 549L137 531M121 549V573" stroke="#18b018" strokeWidth="3" />
    <path d="M342 768L375 810M375 768L342 810" stroke="#f02020" strokeWidth="3" />
  </g>
);

/* ---------- status icons ---------- */
const S = ({ children }: { children: React.ReactNode }) => (
  <svg width="16" height="16" viewBox="0 0 16 16" fill="none" stroke="#fff" aria-hidden>{children}</svg>
);
const statusTools: [string, boolean, React.ReactNode][] = [
  ['正交', false, <S><path d="M2.500 1V14.500H16" strokeWidth="1.300" /><path d="M3 9.500H7.500V14" stroke={BLUE} /></S>],
  ['极轴', true, <S><circle cx="8" cy="8" r="6" stroke="#cfd6dd" /><path d="M8 9L13 4M8 9H14" stroke={BLUE} /></S>],
  ['对象捕捉', true, <S><rect x="2" y="2.500" width="12" height="12" strokeWidth="1.300" /><path d="M1 1.500H5.500V6H1Z" stroke="#f0483c" strokeWidth="1.500" /></S>],
  ['追踪', true, <S><path d="M1 14.500H15M1 14L14 1.500" /><path d="M6 6H9.500V9.500H6Z" stroke={BLUE} /></S>],
  ['动态坐标', false, <S><path d="M3.500 2V13H15M2 4L3.500 2L5 4M13 11.500L15 13L13 14.500M1 15.500L6 10" /><path d="M14 1L8 5L11 6L9 10L15 5L12 4Z" fill={YELLOW} stroke="none" /></S>],
  ['动态输入', true, <S><path d="M1 6.500H9M5 2.500V10.500" strokeWidth="1.300" /><path d="M7 10.500H15V14H7Z" stroke={BLUE} /></S>],
  ['线宽', false, <S><path d="M2 3H14" /><path d="M2 7.500H14" strokeWidth="2" /><path d="M2 12.500H14" strokeWidth="3" /></S>],
  ['透明度', true, <S><rect x="1.500" y="1.500" width="13" height="13" strokeWidth="1.500" /><rect x="4" y="4" width="8" height="8" fill="#8dc8f5" stroke="#bfe0fa" strokeDasharray="1 1" /></S>],
  ['循环选择', false, <S><path d="M1 4.500H8M4.500 1V8" strokeWidth="1.300" /><rect x="6.500" y="7" width="4" height="4" /><rect x="9.500" y="9.500" width="4" height="5" stroke="#bfe0fa" strokeWidth="2" /></S>],
  ['注释比例', false, <S><rect x="8" y="1" width="8" height="6" fill={BLUE} stroke="none" /><path d="M8 1V15" stroke={YELLOW} /><rect x="1" y="10" width="7" height="6" fill="#b9b9b9" stroke="none" /></S>],
  ['单位', false, <S><path d="M1 2.500H15M1 13.500H15M1.500 1V15M14.500 1V15" stroke="#3d8ac2" /><ellipse cx="5" cy="8" rx="1.700" ry="3" stroke="#6cb8ea" /><ellipse cx="11" cy="8" rx="1.700" ry="3" stroke="#6cb8ea" /></S>],
];
const statusRight: [string, React.ReactNode][] = [
  ['三维', <S><path d="M8 1L11 9L16 14L8 12L1 15L6 9Z" fill="#7cc4f5" stroke={BLUE} /><path d="M1 2L8 8M3 1V5" strokeWidth="1.500" /></S>],
  ['隔离对象', <S><path d="M7 3.500H1V12H8" /><circle cx="11" cy="5" r="4.200" /><path d="M10.500 10L14 12.500L10.500 15L8 12.500Z" /></S>],
  ['设置', <Gear size={16} />],
  ['全屏', <S><path d="M1 5V1H5M11 1H15V5M15 11V15H11M5 15H1V11M2 2L6 6M14 2L10 6M2 14L6 10M14 14L10 10" strokeWidth="1.200" /></S>],
  ['菜单', <Burger color={BLUE} />],
];

const menus = ['常用', '注释', '插入', '参数化', '视图', '工具', '智能', '管理', '输出', '在线', '服务', '地理服务'];

export default function App() {
  return (
    <Page>
      <Global />
      <TitleBar>
        <QuickButton $w={36} aria-label="ZW">
          <svg width="22" height="18" viewBox="0 0 22 18" fill="none" aria-hidden>
            <path d="M7 3C3 7 8 9 3 15" stroke="#1683ff" strokeWidth="2.200" />
            <circle cx="7" cy="3" r="2.300" fill="#1683ff" /><circle cx="3" cy="15" r="2.500" fill="#1683ff" />
            <path d="M8 10L12 10L11 17L16 10L15 17L21 11" stroke="#3f9fd6" strokeWidth="1.500" />
          </svg>
        </QuickButton>
        {quick.map(([n, g]) => <QuickButton key={n} aria-label={n}><Q>{g}</Q></QuickButton>)}
        <QuickButton $w={9} aria-label="撤销列表"><Caret w={5} /></QuickButton>
        <QuickButton aria-label="重做"><Q><path d="M14.500 6L9.500 1.500V4.500Q3 5 2 13Q5 9 9.500 9V11Z" fill="#62676e" /></Q></QuickButton>
        <QuickButton $w={9} aria-label="重做列表"><Caret w={5} color="#8a8f96" /></QuickButton>
        <QuickButton aria-label="帮助">
          <Q><circle cx="8" cy="8" r="7" fill={BLUE} /><path d="M5.700 6.500Q5.800 4.200 8 4.200T10.300 6.300Q10.200 7.500 8 8.500V10M8 11V12.500" fill="none" stroke="#fff" strokeWidth="1.500" /></Q>
        </QuickButton>
        <Workspace>
          <Gear />
          <WorkspaceSelect aria-label="工作空间"><option>二维草图与注释</option></WorkspaceSelect>
          <Caret w={6} />
        </Workspace>
        <QuickButton $w={18} aria-label="自定义">
          <svg width="10" height="8" viewBox="0 0 10 8" aria-hidden><path d="M0 1H10" stroke="#fff" strokeWidth="1.500" /><path d="M1 4H9L5 8Z" fill="#fff" /></svg>
        </QuickButton>
        <Title>中望CAD 2026 专业版 - [C:\Users\localuser\Desktop\PointCloud\PointCloud1.dwg]</Title>
        <Row>
          <QuickButton $w={28} aria-label="最小化"><Q><path d="M2 13H14" stroke="#fff" strokeWidth="2" /></Q></QuickButton>
          <QuickButton $w={26} aria-label="还原"><Q><path d="M3.500 .5H14.500V10.500H3.500Z" fill="none" stroke="#fff" /><path d="M3 1H15" stroke="#fff" strokeWidth="2" /><path d="M1.500 2V12.500H13" fill="none" stroke="#fff" /></Q></QuickButton>
          <QuickButton $w={26} aria-label="关闭"><Q><path d="M4 1L14 11M14 1L4 11" stroke="#fff" strokeWidth="2.400" /></Q></QuickButton>
        </Row>
      </TitleBar>
      <MenuBar>
        {menus.map((m) => <MenuTab key={m}>{m}</MenuTab>)}
        <MenuTab $active>点云助手</MenuTab>
        <CollapseButton aria-label="折叠功能区">
          <svg width="14" height="14" viewBox="0 0 14 14" aria-hidden><rect width="14" height="14" fill="#fff" /><path d="M4 9L7 5L10 9Z" fill="#313740" /></svg>
          <Caret w={8} />
        </CollapseButton>
      </MenuBar>
      <Ribbon>
        <Group>
          <GroupBody>
            <BigTool icon="attach" lines={['点云附着']} />
            <BigTool icon="convert" lines={['点云转换']} />
          </GroupBody>
          <GroupLabel>附着</GroupLabel>
        </Group>
        <Group>
          <GroupBody>
            <BigTool icon="align" lines={['对齐']} />
            <BigTool icon="walls" lines={['墙面+墙面']} menu />
            <SmallList $w={88}>
              <SmallTool icon="saveUcs" text="保存 UCS" />
              <SmallTool icon="ucsManager" text="UCS 管理器" />
              <SmallTool icon="resetWcs" text="重置到 WCS" />
            </SmallList>
          </GroupBody>
          <GroupLabel>方向</GroupLabel>
        </Group>
        <Group>
          <GroupBody $gap={7}>
            <ToolRow>
              <BigTool icon="manager" lines={['切片管理器']} />
              <BigTool icon="ucsSlice" lines={['坐标系切片']} />
              <BigTool icon="multi" lines={['多重切片']} />
              <BigTool icon="floors" lines={['楼层检测']} />
            </ToolRow>
            <Fields>
              <Spinner label="切片位置" value="4000.0000" />
              <Spinner label="切片厚度" value="200.0000" />
            </Fields>
          </GroupBody>
          <GroupLabel>切片 <Caret /></GroupLabel>
        </Group>
        <Group>
          <GroupBody>
            <BigTool icon="fit" lines={['墙线拟合']} />
            <BigTool icon="trace" lines={['墙线追踪']} />
            <SmallList>
              <SmallTool icon="detect" text="墙线检测" />
              <SmallTool icon="polyfit" text="多段线适配" />
            </SmallList>
          </GroupBody>
          <GroupLabel>平面图绘制</GroupLabel>
        </Group>
        <Group>
          <GroupBody>
            <BigTool icon="intersect" lines={['提取平面交线']} menu />
            <BigTool icon="plane" lines={['拟合平面']} />
            <SmallList>
              <SmallTool icon="cylinder" text="圆柱" />
              <SmallTool icon="cone" text="圆锥" />
              <SmallTool icon="sphere" text="球" />
            </SmallList>
          </GroupBody>
          <GroupLabel>三维绘图</GroupLabel>
        </Group>
        <Group>
          <GroupBody>
            <BigTool icon="info" lines={['点信息']} />
            <BigTool icon="measure" lines={['距离测量']} menu />
          </GroupBody>
          <GroupLabel>测量</GroupLabel>
        </Group>
        <Group>
          <GroupBody><BigTool icon="dimension" lines={['距离标注']} menu /></GroupBody>
          <GroupLabel>标注</GroupLabel>
        </Group>
        <Group>
          <GroupBody $gap={6}>
            <BigTool icon="ortho" lines={['正射', '影像']} />
            <BigTool icon="vectorize" lines={['图像', '矢量化']} />
            <BigTool icon="deviation" lines={['平面', '偏差分析']} />
          </GroupBody>
          <GroupLabel>工具</GroupLabel>
        </Group>
        <Group>
          <GroupBody><BigTool icon="exportCloud" lines={['点云导出']} /></GroupBody>
          <GroupLabel>导出</GroupLabel>
        </Group>
        <Group>
          <GroupBody>
            <SmallList>
              <SmallTool icon="helpDoc" text="帮助文档" />
              <SmallTool icon="about" text="关于" />
              <SmallTool icon="settings" text="设置" />
            </SmallList>
          </GroupBody>
          <GroupLabel>帮助</GroupLabel>
        </Group>
      </Ribbon>
      <DocTabs>
        <Row $gap={17}>
          <PlainButton aria-label="文档列表"><Burger /></PlainButton>
          <Slash />
        </Row>
        <DocTab>PointCloud*</DocTab>
        <ActiveDoc>
          <PlainButton>PointCloud1*</PlainButton>
          <PlainButton aria-label="关闭文档">
            <svg width="9" height="9" viewBox="0 0 9 9" aria-hidden><path d="M1 1L8 8M8 1L1 8" stroke="#aab4c2" strokeWidth="2" /></svg>
          </PlainButton>
        </ActiveDoc>
        <Row $gap={11}>
          <span />
          <PlainButton aria-label="新建文档"><Plus /></PlainButton>
          <Slash />
        </Row>
      </DocTabs>
      <Canvas>
        <Scene viewBox="1 175 1918 878" preserveAspectRatio="xMinYMin meet">
          <g transform="translate(260 220) scale(.33333)" shapeRendering="crispEdges"><PointCloud /></g>
          <g transform="translate(1108 218) scale(.33333)" opacity="0.35"><PointCloud /></g>
          <g transform="translate(1100 220) scale(.33333)"><FloorPlan /></g>
          <g transform="translate(260 600) scale(.33333)"><UcsIcon /></g>
          <g transform="translate(1108 598) scale(.33333)"><UcsIcon dim /></g>
          <text x="827" y="556" fontSize="28" fill="#f20d0d" fontFamily="Noto Sans CJK SC, sans-serif">绘制平面图</text>
          <path d="M717 599.500L1023 593V586.500L1046 597.500L1023 608.500V602Z" fill="#ff2600" />
        </Scene>
        <ViewLabels>
          <PlainButton>[-]</PlainButton>
          <PlainButton>[自定义]</PlainButton>
          <PlainButton>[线框]</PlainButton>
          <PlainButton>[未命名 UCS]</PlainButton>
        </ViewLabels>
        <ViewWindow>
          <PlainButton aria-label="最小化视图"><svg width="12" height="12" viewBox="0 0 12 12"><path d="M1 8H11" stroke="#e6e6e6" strokeWidth="3" /></svg></PlainButton>
          <PlainButton aria-label="还原视图"><svg width="12" height="12" viewBox="0 0 12 12" fill="none"><path d="M3 1.500H10.500V9" stroke="#e6e6e6" /><rect x="2" y="4" width="6" height="6" stroke="#e6e6e6" strokeWidth="2" /></svg></PlainButton>
          <PlainButton aria-label="关闭视图"><svg width="12" height="12" viewBox="0 0 12 12"><path d="M2 2L10 10M10 2L2 10" stroke="#e6e6e6" strokeWidth="2.400" /></svg></PlainButton>
        </ViewWindow>
        <ViewCube width="130" height="130" viewBox="-65 -65 130 130">
          <g fill="none" stroke="#3e4451" strokeWidth="13">
            {[0, 90, 180, 270].map((a) => <path key={a} transform={`rotate(${a})`} d="M12 -50A51.500 51.500 0 0 1 50 -12" />)}
          </g>
          <rect x="-25" y="-25" width="50" height="50" rx="8" fill="#b4b6b8" />
          <rect x="-15" y="-15" width="30" height="30" fill="#a8aaac" />
          <text x="0" y="11" textAnchor="middle" fontSize="28" fontWeight="300" fill="#303336" fontFamily="Noto Sans CJK SC, sans-serif">上</text>
          <g fontSize="20" fontWeight="300" fill="#858990" textAnchor="middle" fontFamily="Noto Sans CJK SC, sans-serif">
            <text transform="translate(-1 -57) rotate(180)">南</text>
            <text transform="translate(1 42) rotate(180)">北</text>
            <text transform="translate(-50 -7) rotate(180)">东</text>
            <text transform="translate(50 -7) rotate(180)">西</text>
          </g>
        </ViewCube>
        <ListTip>列表</ListTip>
      </Canvas>
      <StatusBar>
        <Row>
          <PlainButton aria-label="布局列表"><Burger color="#fff" /></PlainButton>
          <LayoutTab $active>模型</LayoutTab>
          <LayoutTab>布局1</LayoutTab>
          <Slash />
          <LayoutTab>布局2</LayoutTab>
          <Row $gap={6}>
            <Slash />
            <PlainButton aria-label="新建布局"><Plus size={10} /></PlainButton>
            <Slash />
          </Row>
        </Row>
        <Row>
          {statusTools.map(([n, on, g]) => <StatusButton key={n} $on={on} aria-label={n}>{g}</StatusButton>)}
          <UnitButton>毫米 <Caret w={9} /></UnitButton>
          {statusRight.map(([n, g]) => <StatusButton key={n} aria-label={n}>{g}</StatusButton>)}
        </Row>
      </StatusBar>
      <BottomEdge />
    </Page>
  );
}
